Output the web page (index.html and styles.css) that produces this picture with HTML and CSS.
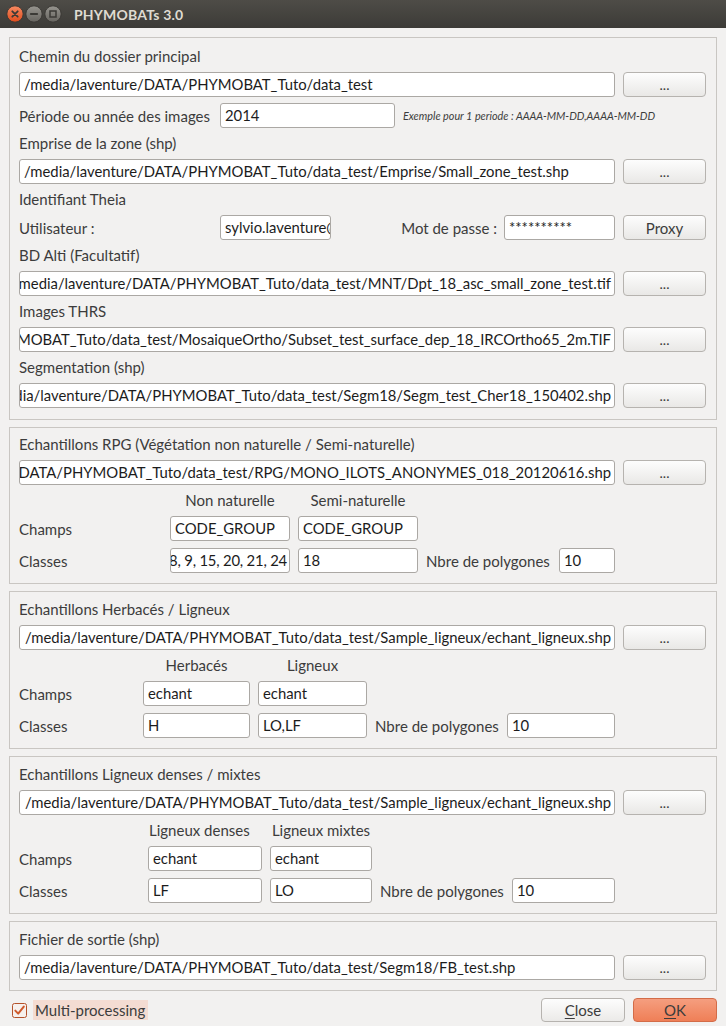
FILE: index.html
```html
<!DOCTYPE html>
<html lang="fr">
<head>
<meta charset="utf-8">
<title>PHYMOBATs 3.0</title>
<link rel="stylesheet" href="styles.css">
</head>
<body>
<div class="window">
  <div class="titlebar">
    <div class="wbtns">
      <svg class="wb" viewBox="0 0 18 18">
        <defs>
          <linearGradient id="gc" x1="0" y1="0" x2="0" y2="1"><stop offset="0" stop-color="#f78a62"/><stop offset="1" stop-color="#df4c1c"/></linearGradient>
          <linearGradient id="gg" x1="0" y1="0" x2="0" y2="1"><stop offset="0" stop-color="#97958f"/><stop offset="1" stop-color="#66645f"/></linearGradient>
        </defs>
        <circle cx="9" cy="9" r="8.2" fill="url(#gc)" stroke="#3a3834" stroke-width="1"/>
        <path d="M6.3 6.3 L11.7 11.7 M11.7 6.3 L6.3 11.7" stroke="#3b3a36" stroke-width="1.8" stroke-linecap="round"/>
      </svg>
      <svg class="wb" viewBox="0 0 18 18">
        <circle cx="9" cy="9" r="8.2" fill="url(#gg)" stroke="#3a3834" stroke-width="1"/>
        <path d="M5.8 9 H12.2" stroke="#3b3a36" stroke-width="1.8" stroke-linecap="round"/>
      </svg>
      <svg class="wb" viewBox="0 0 18 18">
        <circle cx="9" cy="9" r="8.2" fill="url(#gg)" stroke="#3a3834" stroke-width="1"/>
        <rect x="6" y="6" width="6" height="6" fill="none" stroke="#3b3a36" stroke-width="1.5"/>
      </svg>
    </div>
    <div class="title">PHYMOBATs 3.0</div>
  </div>

  <div class="content">
    <section class="group g-main">
      <div class="lbl">Chemin du dossier principal</div>
      <div class="line"><div class="field grow"><span>/media/laventure/DATA/PHYMOBAT_Tuto/data_test</span></div><button class="btn">...</button></div>
      <div class="line">
        <span class="rlbl">Période ou année des images</span>
        <div class="field f-period"><span>2014</span></div>
        <span class="hint">Exemple pour 1 periode : AAAA-MM-DD,AAAA-MM-DD</span>
      </div>
      <div class="lbl">Emprise de la zone (shp)</div>
      <div class="line"><div class="field grow"><span>/media/laventure/DATA/PHYMOBAT_Tuto/data_test/Emprise/Small_zone_test.shp</span></div><button class="btn">...</button></div>
      <div class="lbl">Identifiant Theia</div>
      <div class="line">
        <span class="rlbl">Utilisateur :</span>
        <div class="field f-user"><span>sylvio.laventure@gmail.com</span></div>
        <span class="pwlbl">Mot de passe :</span>
        <div class="field f-user"><span>**********</span></div>
        <button class="btn btn-text">Proxy</button>
      </div>
      <div class="lbl">BD Alti (Facultatif)</div>
      <div class="line"><div class="field grow end"><span>/media/laventure/DATA/PHYMOBAT_Tuto/data_test/MNT/Dpt_18_asc_small_zone_test.tif</span></div><button class="btn">...</button></div>
      <div class="lbl">Images THRS</div>
      <div class="line"><div class="field grow end"><span>/media/laventure/DATA/PHYMOBAT_Tuto/data_test/MosaiqueOrtho/Subset_test_surface_dep_18_IRCOrtho65_2m.TIF</span></div><button class="btn">...</button></div>
      <div class="lbl">Segmentation (shp)</div>
      <div class="line"><div class="field grow end"><span>/media/laventure/DATA/PHYMOBAT_Tuto/data_test/Segm18/Segm_test_Cher18_150402.shp</span></div><button class="btn">...</button></div>
    </section>

    <section class="group g-rpg">
      <div class="lbl">Echantillons RPG (Végétation non naturelle / Semi-naturelle)</div>
      <div class="line"><div class="field grow end"><span>/media/laventure/DATA/PHYMOBAT_Tuto/data_test/RPG/MONO_ILOTS_ANONYMES_018_20120616.shp</span></div><button class="btn">...</button></div>
      <div class="sgrid s-rpg">
        <span class="hd c2">Non naturelle</span>
        <span class="hd c3">Semi-naturelle</span>
        <span class="rl">Champs</span>
        <div class="field"><span>CODE_GROUP</span></div>
        <div class="field"><span>CODE_GROUP</span></div>
        <span class="rl">Classes</span>
        <div class="field end tight"><span>8, 9, 15, 20, 21, 24</span></div>
        <div class="field"><span>18</span></div>
        <span class="nb">Nbre de polygones</span>
        <div class="field"><span>10</span></div>
      </div>
    </section>

    <section class="group">
      <div class="lbl">Echantillons Herbacés / Ligneux</div>
      <div class="line"><div class="field grow end"><span>/media/laventure/DATA/PHYMOBAT_Tuto/data_test/Sample_ligneux/echant_ligneux.shp</span></div><button class="btn">...</button></div>
      <div class="sgrid s-herb">
        <span class="hd c2">Herbacés</span>
        <span class="hd c3">Ligneux</span>
        <span class="rl">Champs</span>
        <div class="field"><span>echant</span></div>
        <div class="field"><span>echant</span></div>
        <span class="rl">Classes</span>
        <div class="field"><span>H</span></div>
        <div class="field"><span>LO,LF</span></div>
        <span class="nb">Nbre de polygones</span>
        <div class="field"><span>10</span></div>
      </div>
    </section>

    <section class="group">
      <div class="lbl">Echantillons Ligneux denses / mixtes</div>
      <div class="line"><div class="field grow end"><span>/media/laventure/DATA/PHYMOBAT_Tuto/data_test/Sample_ligneux/echant_ligneux.shp</span></div><button class="btn">...</button></div>
      <div class="sgrid s-lig">
        <span class="hd c2 hd-left">Ligneux denses</span>
        <span class="hd c3">Ligneux mixtes</span>
        <span class="rl">Champs</span>
        <div class="field"><span>echant</span></div>
        <div class="field"><span>echant</span></div>
        <span class="rl">Classes</span>
        <div class="field"><span>LF</span></div>
        <div class="field"><span>LO</span></div>
        <span class="nb">Nbre de polygones</span>
        <div class="field"><span>10</span></div>
      </div>
    </section>

    <section class="group">
      <div class="lbl">Fichier de sortie (shp)</div>
      <div class="line"><div class="field grow"><span>/media/laventure/DATA/PHYMOBAT_Tuto/data_test/Segm18/FB_test.shp</span></div><button class="btn">...</button></div>
    </section>
  </div>

  <div class="footer">
    <label class="mp">
      <svg class="cb" viewBox="0 0 15 15">
        <rect x="0.5" y="0.5" width="14" height="14" rx="2" fill="#f6f1ee" stroke="#b4532c"/>
        <path d="M3.3 7.6 L6.2 10.6 L11.8 3.6" fill="none" stroke="#cf5a2c" stroke-width="2" stroke-linecap="round" stroke-linejoin="round"/>
      </svg>
      <span class="mp-text">Multi-processing</span>
    </label>
    <div class="actions">
      <button class="pbtn"><u>C</u>lose</button>
      <button class="pbtn ok"><u>O</u>K</button>
    </div>
  </div>
</div>
</body>
</html>
```

FILE: styles.css
```css
* { box-sizing: border-box; }

body {
  margin: 0;
  background: #f2f1f0;
  font-family: Lato, "Liberation Sans", sans-serif;
  font-size: 15px;
  color: #3c3c3c;
}

.window {
  width: 726px;
  height: 1026px;
  display: flex;
  flex-direction: column;
  background: #f2f1f0;
  overflow: hidden;
}

/* title bar */
.titlebar {
  height: 28px;
  flex: none;
  display: flex;
  align-items: center;
  padding-left: 6px;
  background: linear-gradient(#4e4c47, #3c3b37);
}
.wbtns { display: flex; gap: 1px; }
.wb { width: 18px; height: 18px; display: block; }
.title {
  margin-left: 12px;
  color: #dfdbd2;
  font-weight: bold;
  font-size: 14px;
  letter-spacing: 0.2px;
}

/* content */
.content {
  padding: 9px 9px 0;
  display: flex;
  flex-direction: column;
  gap: 7px;
}

.group {
  border: 1px solid #c9c6c2;
  padding: 8px 10px 10px 9px;
  display: flex;
  flex-direction: column;
  gap: 6px;
}
.g-main { padding-top: 9px; padding-bottom: 11px; }
.g-rpg { padding-top: 7px; }

.lbl {
  height: 19px;
  line-height: 19px;
  white-space: nowrap;
}

.line {
  display: flex;
  align-items: center;
  gap: 8px;
  height: 25px;
}

.field {
  height: 25px;
  border: 1px solid #aba8a4;
  border-radius: 3px;
  background: #fff;
  color: #1c1c1c;
  padding: 0 4px;
  font-size: 14.85px;
  line-height: 23px;
  overflow: hidden;
  white-space: nowrap;
  display: flex;
}
.field > span { flex: none; }
.field.end { justify-content: flex-end; padding-right: 3px; }
.field.tight { padding-left: 0; padding-right: 2px; letter-spacing: -0.2px; }
.grow { flex: 1; min-width: 0; }

.btn {
  width: 83px;
  height: 25px;
  flex: none;
  border: 1px solid #b6b3af;
  border-radius: 4px;
  background: linear-gradient(#fdfdfd, #e9e8e6);
  font: inherit;
  font-size: 14px;
  color: #3c3c3c;
  padding: 0;
}
.btn-text { font-size: 15px; }

.rlbl { width: 193px; flex: none; white-space: nowrap; }
.f-period { width: 175px; flex: none; }
.f-user { width: 111px; flex: none; }
.hint {
  font-style: italic;
  font-size: 10.8px;
  color: #3c3c3c;
  white-space: nowrap;
}
.pwlbl { flex: 1; text-align: right; margin-right: -1px; white-space: nowrap; }

/* sample grids */
.sgrid {
  display: grid;
  column-gap: 8px;
  row-gap: 7px;
  grid-template-rows: 18px 25px 25px;
  align-items: center;
}
.s-rpg { grid-template-columns: 143px 120px 120px 125px 56px; }
.s-herb { grid-template-columns: 116px 107px 109px 124px 108px; }
.s-lig { grid-template-columns: 121px 114px 102px 124px 103px; }

.hd { text-align: center; line-height: 18px; white-space: nowrap; }
.hd-left { text-align: left; padding-left: 1px; }
.c2 { grid-column: 2; }
.c3 { grid-column: 3; }
.rl { grid-column: 1; }
.nb { white-space: nowrap; }

/* footer */
.footer {
  flex: 1;
  display: flex;
  align-items: flex-start;
  justify-content: space-between;
  padding: 7px 9px 0 12px;
}
.mp {
  display: flex;
  align-items: center;
  gap: 6px;
  height: 24px;
}
.cb { width: 15px; height: 15px; display: block; }
.mp-text {
  background: #f4dcd2;
  padding: 0 3px 0 2px;
  line-height: 20px;
}
.actions { display: flex; gap: 8px; }
.pbtn {
  width: 84px;
  height: 24px;
  border: 1px solid #b6b3af;
  border-radius: 4px;
  background: linear-gradient(#fdfdfd, #ebeae8);
  font: inherit;
  color: #3c3c3c;
  padding: 0;
}
.pbtn.ok {
  background: linear-gradient(#f59e7f, #ef7f57);
  border-color: #d36c48;
}
.pbtn u { text-decoration-thickness: 1px; text-underline-offset: 2px; }
```
